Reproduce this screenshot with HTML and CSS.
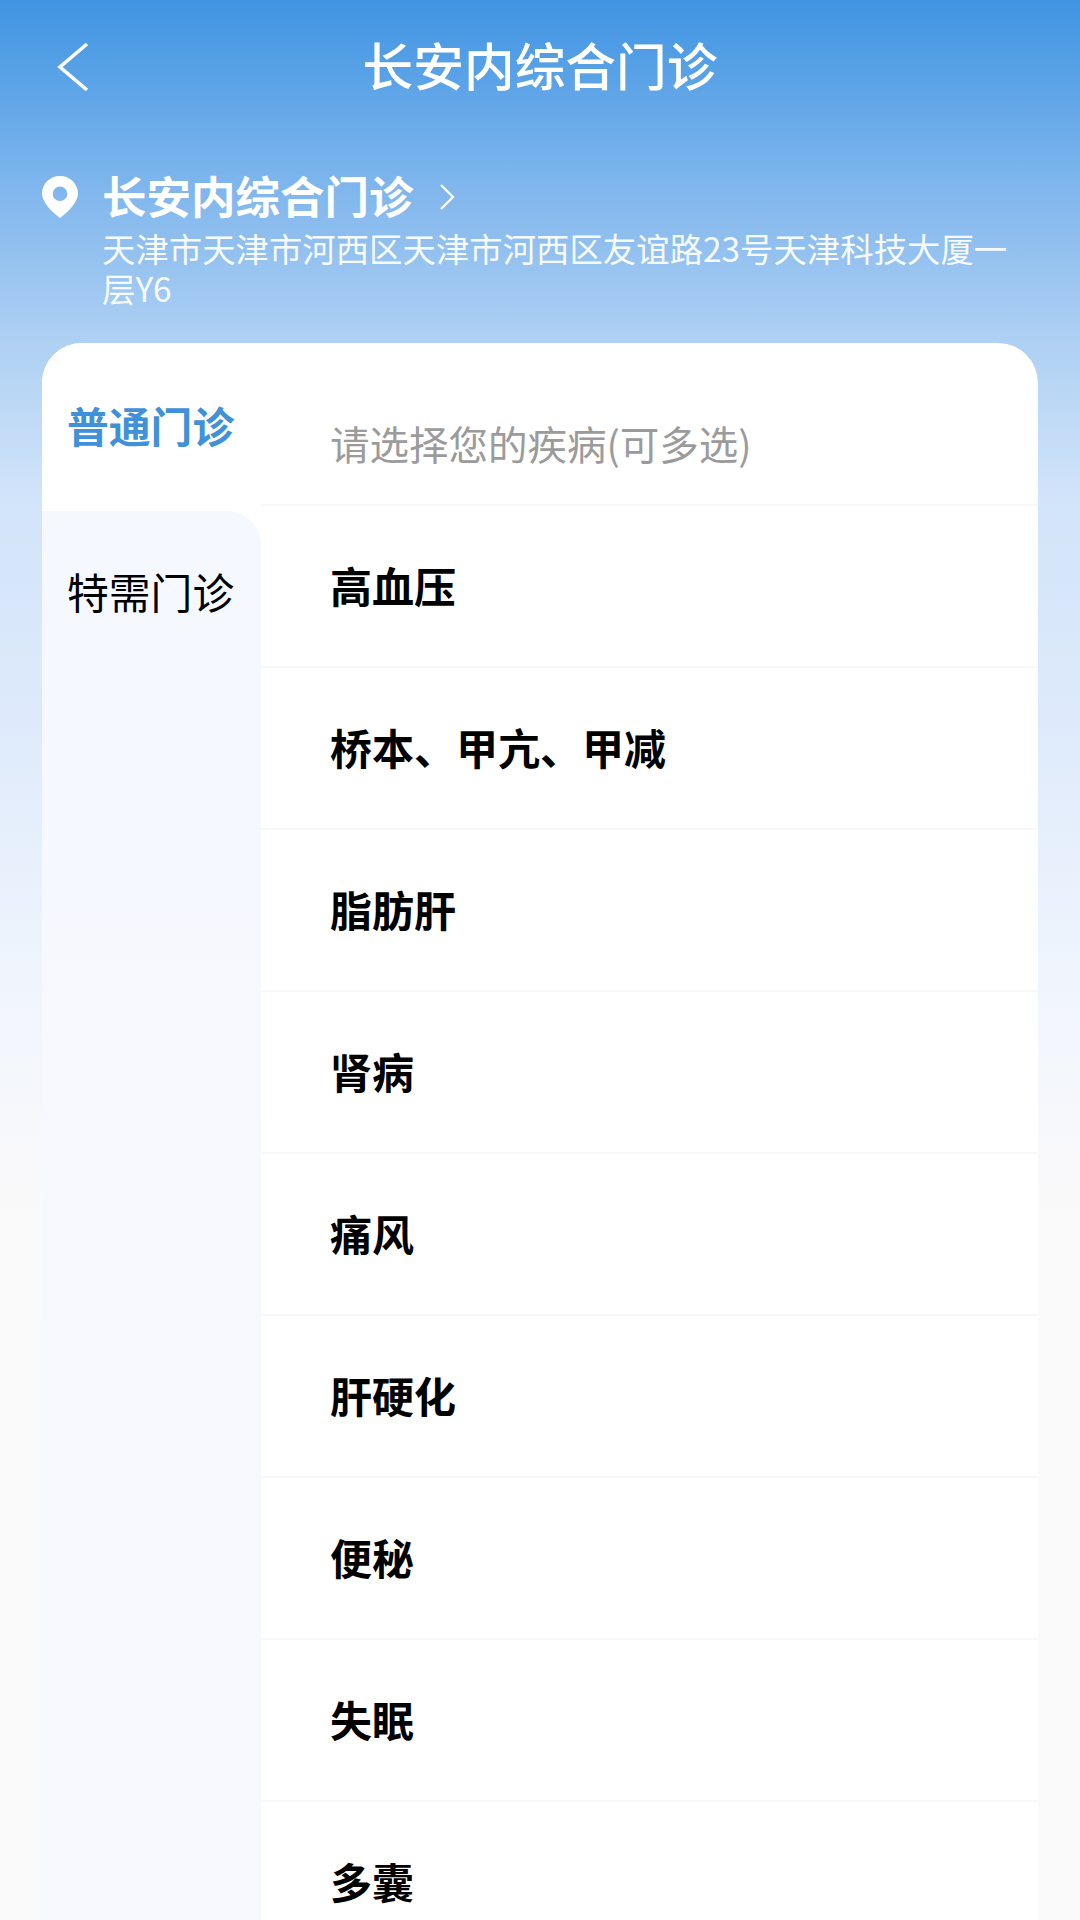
FILE: index.html
```html
<!DOCTYPE html>
<html lang="zh-CN">
<head>
<meta charset="utf-8">
<title>长安内综合门诊</title>
<link rel="stylesheet" href="styles.css">
</head>
<body>
<div class="page">
  <header class="topbar">
    <svg class="back" viewBox="0 0 32 50" width="32" height="50" fill="none" stroke="#fff" stroke-width="3.6"><path d="M30 2 3 25l27 23"/></svg>
    <h1 class="title">长安内综合门诊</h1>
  </header>
  <section class="clinic">
    <svg class="pin" viewBox="0 0 36 42" width="36" height="42"><path fill="#fff" fill-rule="evenodd" d="M18 0C8 0 0 7.8 0 17.4C0 27 11 36.5 18 42c7-5.5 18-15 18-24.600C36 7.800 28 0 18 0Zm0 10.500a7.300 7.300 0 1 1 0 14.600 7.300 7.300 0 0 1 0-14.600Z"/></svg>
    <div class="clinic-info">
      <div class="clinic-name">
        <span>长安内综合门诊</span>
        <svg class="more" viewBox="0 0 16 28" width="16" height="28" fill="none" stroke="#fff" stroke-width="2.4"><path d="M2 2l12 12L2 26"/></svg>
      </div>
      <p class="address">天津市天津市河西区天津市河西区友谊路23号天津科技大厦一层Y6</p>
    </div>
  </section>
  <main class="card">
    <nav class="side">
      <div class="tab tab-active">普通门诊</div>
      <div class="tab tab-rest">特需门诊</div>
    </nav>
    <div class="list">
      <div class="list-head">请选择您的疾病(可多选)</div>
      <div class="row">高血压</div>
      <div class="row">桥本、甲亢、甲减</div>
      <div class="row">脂肪肝</div>
      <div class="row">肾病</div>
      <div class="row">痛风</div>
      <div class="row">肝硬化</div>
      <div class="row">便秘</div>
      <div class="row">失眠</div>
      <div class="row">多囊</div>
    </div>
  </main>
</div>
</body>
</html>
```
FILE: styles.css
```css
* { box-sizing: border-box; }
html, body { margin: 0; padding: 0; }
body {
  width: 1080px;
  height: 1920px;
  overflow: hidden;
  font-family: "Noto Sans CJK SC", "Noto Sans", sans-serif;
}
.page {
  width: 1080px;
  height: 1920px;
  overflow: hidden;
  display: flex;
  flex-direction: column;
  background: linear-gradient(180deg, #3f94e2 0, #7ab3ec 170px, #aed0f3 340px, #d2e4fa 500px, #deeafb 720px, #f0f5fd 980px, #f9f9fb 1170px, #fafafa 1240px, #fafafa 1920px);
}
.topbar {
  position: relative;
  height: 172px;
  padding-top: 34px;
  flex: none;
}
.back { position: absolute; left: 57px; top: 42px; }
.title {
  margin: 0;
  text-align: center;
  font-size: 50.7px;
  line-height: 60px;
  font-weight: 500;
  color: #fff;
}
.clinic {
  display: flex;
  align-items: flex-start;
  padding: 4px 42px 0;
  height: 171px;
  flex: none;
  color: #fff;
}
.pin { flex: none; }
.clinic-info { margin-left: 24px; width: 920px; }
.clinic-name {
  display: flex;
  align-items: center;
  margin-top: -3px;
  font-size: 44.5px;
  line-height: 44px;
  font-weight: 700;
}
.more { margin-left: 25px; margin-top: 3px; }
.address {
  margin: 11px 0 0;
  font-size: 33.4px;
  line-height: 40px;
  color: #fff;
  opacity: 0.92;
}
.card {
  flex: 1;
  margin: 0 42px;
  display: flex;
  background: #fff;
  border-radius: 40px 40px 0 0;
  overflow: hidden;
}
.side {
  width: 219px;
  flex: none;
  display: flex;
  flex-direction: column;
  background: #fff;
}
.tab {
  padding-left: 25px;
  font-size: 41.8px;
  color: #000;
}
.tab-active {
  height: 168px;
  line-height: 164px;
  font-weight: 700;
  color: #4091d8;
}
.tab-rest {
  flex: 1;
  padding-top: 40px;
  line-height: 81px;
  background: linear-gradient(180deg, #f5f8fe, #f8f9fe);
  border-top-right-radius: 34px;
}
.list { flex: 1; min-width: 0; }
.list-head {
  height: 163px;
  padding: 72px 0 0 69px;
  font-size: 39.5px;
  line-height: 56px;
  color: #9b9b9b;
  border-bottom: 2px solid #f8f8f8;
}
.row {
  height: 162px;
  padding-left: 69px;
  font-size: 42px;
  line-height: 158px;
  font-weight: 700;
  color: #000;
  border-bottom: 2px solid #f8f8f8;
}
```
